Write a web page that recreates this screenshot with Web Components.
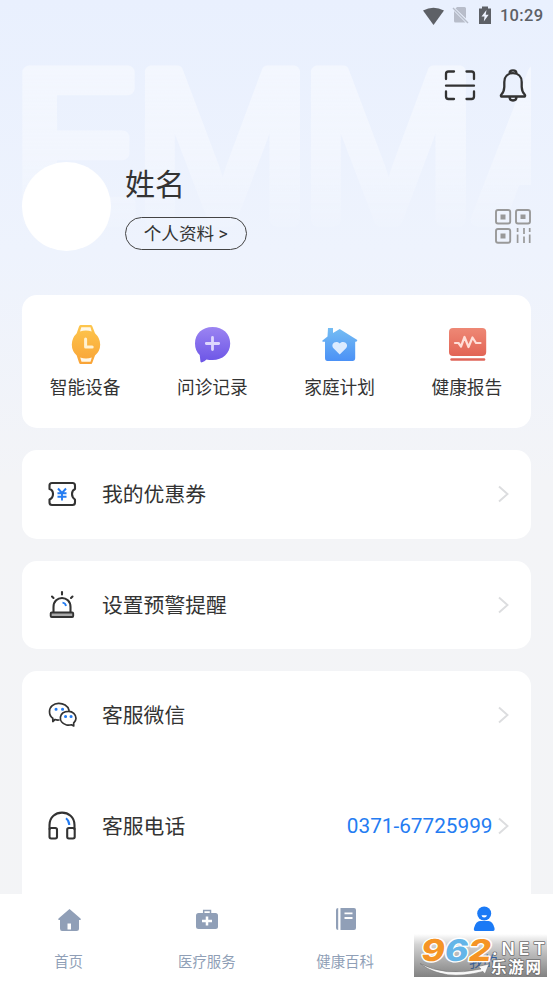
<!DOCTYPE html>
<html lang="zh-CN">
<head>
<meta charset="utf-8">
<title>我的</title>
<style>
html,body{margin:0;height:100%;overflow:hidden}
body{font-family:Roboto,"Noto Sans CJK SC",sans-serif;color:#333}
</style>
</head>
<body>
<mine-page></mine-page>
<script>
function define(name, css, html, after) {
  const t = document.createElement('template');
  t.innerHTML = `<style>*{box-sizing:border-box}svg{display:block;flex:none}${css}</style>${html}`;
  customElements.define(name, class extends HTMLElement {
    constructor() {
      super();
      this.attachShadow({mode: 'open'}).appendChild(t.content.cloneNode(true));
    }
    connectedCallback() { if (after) after.call(this, this.shadowRoot); }
  });
}
const line = 'fill="none" stroke="#333" stroke-linecap="round" stroke-linejoin="round"';
const stroke = line + ' stroke-width="2.1"';
/* [x, y, width, height, markup]: x and y are the origin of the icon's own drawing space */
const icons = {
  wifi: [422,4,22,19,'<path d="M423 8.500Q433.500 3 444 8.500L433.500 23Z" fill="#5d6066"/>'],
  nosim: [452,6,18,18,'<path d="M457 7H464.500a1.500 1.500 0 0 1 1.500 1.500V18.500L455.500 8.500ZM454 11L465.500 22.500H455.500A1.500 1.500 0 0 1 454 21Z" fill="#b8bdca"/><path d="M453 8L468 23" stroke="#b8bdca" stroke-width="1.400"/>'],
  battery: [478,5,14,19,'<path d="M479 7.500H482V5.500H488V7.500H491V23H479Z" fill="#5d6066"/><path d="M486.500 9L481.500 15.500H484.500L483.800 20.500L488.700 13.800H485.700Z" fill="#edf2fe"/>'],
  scan: [443,68,34,34,`<path ${line} stroke-width="2.300" d="M446 79V74Q446 71.500 448.500 71.500H454M466.500 71.500H471.500Q474 71.500 474 74V79M446 91.500V96.500Q446 99 448.500 99H454M466.500 99H471.500Q474 99 474 96.500V91.500M446 85.700H474"/>`],
  bell: [498,68,31,35,`<path ${line} stroke-width="2.300" d="M509.500 73.500Q509.500 70.300 513 70.300T516.500 73.500M501.200 96.500Q500.500 95.500 501.400 94.500Q504 92 504.300 87V82C504.300 76.500 508 73.200 513 73.200S521.700 76.500 521.700 82V87Q522 92 524.700 94.500Q525.500 95.500 524.800 96.500ZM509.500 97Q509.500 100.500 513 100.500T516.500 97"/>`],
  qr: [494,208,38,37,'<g fill="none" stroke="#999" stroke-width="1.900"><rect x="496" y="210" width="14.200" height="13.500" rx="2"/><rect x="516" y="210" width="14" height="13.500" rx="2"/><rect x="496" y="229" width="14.200" height="13.800" rx="2"/><path stroke-width="1.700" d="M517.600 228V232M517.600 234.500V243M524 228V234M524 236.500V243M529.700 228V232M529.700 234.500V243" /></g><path fill="#999" d="M500.500 214.500h5v5h-5zM520.500 214.500h5v4.500h-5zM500.500 233.500h5v5h-5z"/>'],
  watch: [66,324,40,42,'<defs><linearGradient id="g" x2="0" y2="1"><stop stop-color="#fdc64d"/><stop offset="1" stop-color="#f9a336"/></linearGradient></defs><path fill="url(#g)" d="M80.500 325H91Q92 325 92.400 326.500L95 333.200Q100.200 338 100.200 344.500T95 355.500L92.400 362.500Q92 364 91 364H80.500Q79.500 364 79 362.500L76.700 355.500Q71.800 351 71.800 344.500T76.700 333.200L79 326.500Q79.500 325 80.500 325Z"/><path fill="#fff7e6" d="M81.300 327.300H90.500L91.700 331.500Q86 329.500 80 331.500ZM80.200 357.500Q86 359.600 91.800 357.500L90.500 361.700H81.500Z"/><path d="M85.600 339V347H92.200" fill="none" stroke="#fff1d0" stroke-width="3" stroke-linecap="round" stroke-linejoin="round"/>'],
  consult: [193,325,40,40,'<defs><linearGradient id="g" x2="0" y2="1"><stop stop-color="#9b84f2"/><stop offset="1" stop-color="#6c55e6"/></linearGradient></defs><path fill="url(#g)" d="M212.600 327C223 327 230.200 333.800 230.200 343.400S222.500 360 212.600 360Q209 360 206.500 359.400Q204.500 361.500 202 362.300Q200.300 362.700 200.400 361L199.700 355Q195 350.500 195 343.400C195 333.800 202.200 327 212.600 327Z"/><path d="M212.500 337.500V349.500M206.300 343.500H218.700" stroke="#ded7fd" stroke-width="2.800" stroke-linecap="round"/>'],
  family: [320,325,40,40,'<defs><linearGradient id="g" x2="0" y2="1"><stop stop-color="#75bdf3"/><stop offset="1" stop-color="#4b91f6"/></linearGradient></defs><path fill="url(#g)" d="M328 328H333V333L339.700 329L357.300 340Q357.500 342 355.200 341.700V358Q355.200 361 352.500 361H327.500Q325 361 325 358V341.700Q321.500 342 322.500 340.500L327.500 336.500Z"/><path fill="#dcebff" d="M339.700 354.500L333.500 348.300C330 344 335.700 339.500 339.700 343.500C343.700 339.500 349.500 344 346 348.300Z"/>'],
  report: [446,325,42,40,'<defs><linearGradient id="g" x2="0" y2="1"><stop stop-color="#ee8875"/><stop offset="1" stop-color="#e26455"/></linearGradient></defs><rect x="449" y="328" width="37.200" height="28" rx="4" fill="url(#g)"/><rect x="450.300" y="358.200" width="35" height="2.600" rx="1.200" fill="#df6659"/><path d="M455 343H458.500L461 346.500L464.500 337L468.500 347L472.500 337.500L476 343H480.500" fill="none" stroke="#ffded7" stroke-width="2.200" stroke-linejoin="round" stroke-linecap="round"/>'],
  coupon: [47,480,30,28,`<path ${stroke} d="M52 483H72.500Q75 483 75 485.500V489Q72 490.500 72 494T75 499.500V502.500Q75 505 72.500 505H52Q49.500 505 49.500 502.500V499.500Q53 498 53 494T49.500 489V485.500Q49.500 483 52 483Z"/><path fill="none" stroke="#247cf2" stroke-width="1.900" d="M58 488.500L62 493L66 488.500M57.500 493.200H66.500M57.500 496.800H66.500M62 493V500.500"/>`],
  alarm: [47,590,30,30,`<path ${stroke} d="M53.500 612V607C53.500 595 70.500 595 70.500 607V612M62 592V594.500M52 596.500L53.500 598M72.500 596.500L71 598"/><rect x="50.700" y="612.500" width="22.500" height="4.500" rx="1" fill="#aaa" stroke="#333" stroke-width="1.900"/><path d="M62.500 602.700Q65.500 603 66 606" fill="none" stroke="#247cf2" stroke-width="1.800"/>`],
  wechat: [47,700,32,30,`<path ${line} stroke-width="1.700" d="M58.800 720Q57 720.200 55 719.500L52.800 721.500V718.200Q49.500 716 49.500 711.700C49.500 700.800 67 701 69 710.300M68.800 711.300C72.500 711.300 76 714.300 76 718.300Q76 721 73.700 723V726L71.500 724.800Q69 725.500 66.500 725C57.500 722.500 58.500 711.300 68.800 711.300Z"/><path stroke="#247cf2" stroke-width="3" stroke-linecap="round" d="M56 709.200h.1M62.500 709.200h.1M65.500 716.400h.1M71 716.400h.1"/>`],
  phone: [47,811,30,30,`<path ${stroke} d="M49.500 829V825C49.500 808.500 74.500 808.500 74.500 825V829"/><g ${stroke}><rect x="49.500" y="828" width="7.500" height="10.500" rx="1.700"/><rect x="67.200" y="828" width="7.500" height="10.500" rx="1.700"/></g><path d="M66 818.300Q69 820.500 69.300 825" fill="none" stroke="#247cf2" stroke-width="2"/>`],
  home: [57,906,25,25,'<path fill="#909fb7" fill-rule="evenodd" d="M69.500 908L80.500 917.500Q81.500 919 79.500 919H79V927.500Q79 930 76.500 930H62Q60 930 60 927.500V919Q57.500 919 58.500 917.500ZM67.500 922.500V928.500H71V922.500Z"/>'],
  medical: [195,908,24,22,'<path d="M203.700 914V910.500H210.500V914" fill="none" stroke="#909fb7" stroke-width="1.500"/><rect x="196" y="913" width="22" height="16" rx="2.500" fill="#909fb7"/><path d="M207 916.500V925.500M202 921H212" stroke="#fff" stroke-width="2.500"/>'],
  book: [334,907,22,24,'<path fill="#909fb7" d="M337.200 908V930Q335 930 335 928V910Q335 908 337.200 908ZM339.500 908H353Q355 908 355 910V928Q355 930 353 930H339.500Z"/><path d="M343.500 913.300H351.500M343.500 918H351.500" stroke="#fff" stroke-width="1.800"/>'],
  user: [472,906,24,26,'<circle cx="484.200" cy="913.500" r="7" fill="#1b7af6"/><path d="M481.500 915.200H487Q486.500 917.500 484.200 917.500T481.500 915.200Z" fill="#fff"/><path fill="#1b7af6" d="M480 921H488.500Q492.500 921 494.500 928Q495 931 493 931H475.500Q473.300 931 474 928Q476 921 480 921Z"/>'],
  arrow: [496,484,14,20,'<path d="M499 486.500L507.500 494L499 501.500" fill="none" stroke="#dcdddf" stroke-width="1.900"/>']
};
define('ui-icon', ':host{display:block;flex:none}', '', function (root) {
  const [x, y, w, h, m] = icons[this.getAttribute('name')];
  root.innerHTML = `<style>:host{display:block;flex:none}svg{display:block}</style><svg width="${w}" height="${h}" viewBox="${x} ${y} ${w} ${h}">${m}</svg>`;
});
define('status-bar', ':host{display:flex;align-items:center;justify-content:flex-end;height:30px;padding-right:9.500px;color:#5d6066;font:500 16.500px/30px Roboto,sans-serif;letter-spacing:.35px}.n{margin-left:8px}.b{margin:0 8px}span{padding-top:1px}',
  '<ui-icon name="wifi"></ui-icon><ui-icon class="n" name="nosim"></ui-icon><ui-icon class="b" name="battery"></ui-icon><span><slot></slot></span>');
/* Oversized brand letters fading out behind the header */
define('brand-backdrop', ':host{display:block;position:absolute;left:22px;top:50px;width:509px;height:190px;overflow:hidden}text{font:400 203px Inter,sans-serif;stroke:#fff;stroke-width:13px;stroke-linejoin:round}g{opacity:.42}',
  `<svg width="509" height="190" viewBox="22 50 509 190"><defs><linearGradient id="f" gradientUnits="userSpaceOnUse" x1="0" y1="65" x2="0" y2="228"><stop stop-color="#fff"/><stop offset=".5" stop-color="#ccc"/><stop offset="1" stop-color="#222"/></linearGradient><mask id="m" maskUnits="userSpaceOnUse" x="22" y="50" width="509" height="190"><rect x="22" y="50" width="509" height="190" fill="url(#f)"/></mask></defs>
  <g mask="url(#m)" fill="#fff"><text x="10" y="219.500" textLength="133" lengthAdjust="spacingAndGlyphs">E</text><text x="134" y="219.500" textLength="177" lengthAdjust="spacingAndGlyphs">M</text><text x="300" y="219.500" textLength="177" lengthAdjust="spacingAndGlyphs">M</text><text x="472" y="219.500" textLength="150" lengthAdjust="spacingAndGlyphs">A</text></g></svg>`);
define('profile-header', `:host{display:flex;flex-direction:column;height:265px;padding:38px 22px 0}
  .tools{display:flex;justify-content:flex-end;height:36px;gap:21px;padding-right:2px}
  .who{display:flex;height:89px;margin-top:58px}.avatar{width:89px;height:89px;border-radius:50%;background:#fff}
  .info{flex:1;padding-left:14px}.name{font-size:30px;line-height:46px;height:55px}
  .pill{display:flex;align-items:center;justify-content:center;width:121.500px;height:33px;border:1px solid #444;border-radius:17px;font-size:17.600px;white-space:pre;line-height:31px;padding-top:2px}
  .qr{padding-top:46px;margin-right:-1px}`,
  `<div class="tools"><ui-icon name="scan"></ui-icon><ui-icon name="bell"></ui-icon></div>
  <div class="who"><div class="avatar"></div><div class="info"><div class="name"><slot></slot></div><div class="pill">个人资料 &gt;</div></div><ui-icon class="qr" name="qr"></ui-icon></div>`);
define('quick-card', ':host{display:flex;height:133px;padding-top:25px;border-radius:15px;background:#fff}', '<slot></slot>');
/* An element that passes its icon attribute on to the ui-icon inside it */
function named(name, css, html) {
  const t = document.createElement('template');
  t.innerHTML = `<style>*{box-sizing:border-box}${css}</style>${html}`;
  customElements.define(name, class extends HTMLElement {
    constructor() {
      super();
      const c = t.content.cloneNode(true);
      c.querySelector('[data-icon]').setAttribute('name', this.getAttribute('icon'));
      this.attachShadow({mode: 'open'}).appendChild(c);
    }
  });
}
named('quick-entry', ':host{flex:1;display:flex;flex-direction:column;align-items:center;font-size:17.700px;line-height:26px}.i{height:50px;display:flex;align-items:center;margin-bottom:5px}span{margin-right:1px}',
  '<div class="i"><ui-icon data-icon></ui-icon></div><span><slot></slot></span>');
define('menu-card', ':host{display:block;border-radius:15px;background:#fff;overflow:hidden}', '<slot></slot>');
named('menu-row', ':host{display:flex;align-items:center;height:88.500px;padding:0 21.500px 0 25px;font-size:20.800px;line-height:30px}.i{width:55px}.t{flex:1;padding-top:2px}.v{color:#247cf2;margin-right:3px;font-size:20.750px;padding-top:1px}',
  '<div class="i"><ui-icon data-icon></ui-icon></div><div class="t"><slot></slot></div><div class="v"><slot name="value"></slot></div><ui-icon name="arrow"></ui-icon>');
named('tab-item', ':host{flex:1;display:flex;flex-direction:column;align-items:center;font-size:14.400px;line-height:22px;color:#909fb7}:host([active]){color:#1267dc}.i{height:26px;display:flex;align-items:center;margin-bottom:19.500px}span{margin-right:1px}',
  '<div class="i"><ui-icon data-icon></ui-icon></div><span><slot></slot></span>');
define('tab-bar', ':host{position:absolute;left:0;right:0;bottom:0;display:flex;height:89px;padding-top:12px;background:#fff}', '<slot></slot>');
define('site-badge', ':host{position:absolute;left:414px;top:934px;width:133px;height:43px;background:linear-gradient(#5550,#5554 25%,#555b)}svg{overflow:visible}',
  `<svg width="133" height="43" viewBox="414 934 133 43">
  <path d="M420 963.500Q445 977 481 969L478 966.500L489 964L485 974L483 971.500Q444 982 420 963.500Z" fill="#f8f8f8" stroke="#777" stroke-width=".6"/>
  <g font-family="Inter,sans-serif" font-weight="800" font-size="30" stroke="#fff" stroke-width="2.600" paint-order="stroke" stroke-linejoin="round"><text transform="translate(420 961) skewX(-9)" textLength="70" lengthAdjust="spacingAndGlyphs"><tspan fill="#f59425">9</tspan><tspan fill="#64b5e8">6</tspan><tspan fill="#f59425">2</tspan></text></g>
  <g fill="#fff" stroke="#707070" stroke-width="1.600" paint-order="stroke" stroke-linejoin="round"><text x="492" y="955" font-family="Inter,sans-serif" font-weight="600" font-size="17.500" textLength="53" >.NET</text><text x="491" y="973" font-family="Noto Sans CJK SC,sans-serif" font-weight="700" font-size="15.500" textLength="50">乐游网</text></g></svg>`);
define('mine-page', `:host{display:block;position:relative;width:553px;height:983px;overflow:hidden;background:linear-gradient(#e9f0fe 0,#eef3fd 250px,#f3f4f7 480px,#f3f4f6)}
  main{position:relative}.cards{display:flex;flex-direction:column;gap:22px;padding:0 22px}.support{height:260px}menu-row + menu-row{margin-top:22px}`,
  `<brand-backdrop></brand-backdrop>
  <main><status-bar>10:29</status-bar><profile-header>姓名</profile-header>
  <div class="cards">
    <quick-card><quick-entry icon="watch">智能设备</quick-entry><quick-entry icon="consult">问诊记录</quick-entry><quick-entry icon="family">家庭计划</quick-entry><quick-entry icon="report">健康报告</quick-entry></quick-card>
    <menu-card><menu-row icon="coupon">我的优惠券</menu-row></menu-card>
    <menu-card><menu-row icon="alarm">设置预警提醒</menu-row></menu-card>
    <menu-card class="support"><menu-row icon="wechat">客服微信</menu-row><menu-row icon="phone">客服电话<span slot="value">0371-67725999</span></menu-row></menu-card>
  </div></main>
  <tab-bar><tab-item icon="home">首页</tab-item><tab-item icon="medical">医疗服务</tab-item><tab-item icon="book">健康百科</tab-item><tab-item icon="user" active>我的</tab-item></tab-bar>
  <site-badge></site-badge>`);
</script>
</body>
</html>
